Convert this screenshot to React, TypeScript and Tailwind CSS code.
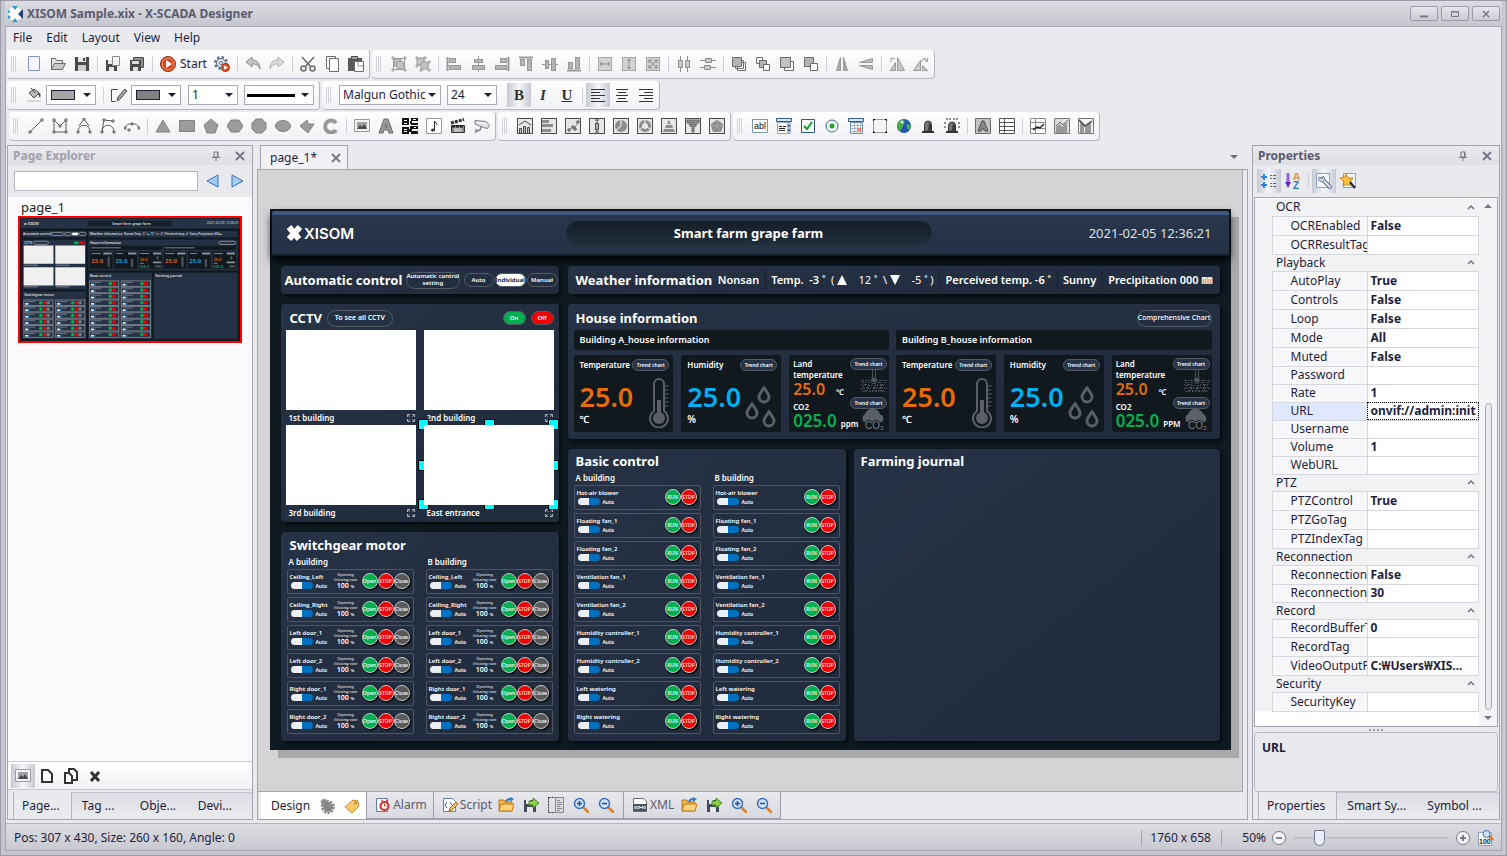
import type { ReactNode } from "react";
import { clsx } from "clsx";

const G = "#8d8d90";
const D = "#4a4a4c";
const L = "#b4b4b6";

/* ---------- icons, all on a 16x16 grid ---------- */

const alignBars = (
  <g fill={L} stroke="#98989a">
    <rect x="3.5" y="2.5" width="6" height="4" />
    <rect x="3.5" y="9.5" width="11" height="4" />
    <path d="M1.5 1v14" strokeWidth="2" />
  </g>
);

const centerBars = (
  <g fill={L} stroke="#98989a">
    <path d="M8.5 0v16" />
    <rect x="4.5" y="3.5" width="8" height="3" />
    <rect x="2.5" y="9.5" width="12" height="4" />
  </g>
);

const frame = <rect x="0.5" y="0.5" width="15" height="15" fill="#e6e6e8" stroke={D} />;

const arrowsBox = <rect x="1.5" y="1.5" width="13" height="13" fill="#d2d2d4" stroke="#a6a6a8" />;

const magnifier = (
  <g>
    <path d="M10 10l5 5" stroke="#d9822b" strokeWidth="2.5" strokeLinecap="round" />
    <circle cx="6.5" cy="6.5" r="5" fill="#cfe2fb" stroke="#3f6fb5" strokeWidth="1.5" />
  </g>
);

const icons: Record<string, ReactNode> = {
  newPage: <path d="M2.5 0.5h11v14h-11z" fill="#f5f8ff" stroke="#7d93cf" />,
  open: (
    <g stroke="#6b6b6d" fill="#e2e2e4">
      <path d="M1.5 13.5v-11h4l1 2h6v3" />
      <path d="M1.5 13.5l3-6h11l-3 6z" fill="#c9c9cb" />
    </g>
  ),
  save: (
    <g>
      <path d="M1 1h14v14H1z" fill={D} />
      <path d="M4 1h8v5H4z" fill="#e8e8ea" />
      <path d="M4 9h8v6H4z" fill="#cfcfd1" />
      <path d="M9 2h2v3H9z" fill={D} />
    </g>
  ),
  saveAs: (
    <g>
      <path d="M1 4h11v11H1z" fill={D} />
      <path d="M3 4h4v4H3zM4 11h5v4H4z" fill="#e8e8ea" />
      <path d="M7.5 0.5h7v9h-7z" fill="#f3f3f5" stroke={G} />
    </g>
  ),
  saveAll: (
    <g>
      <path d="M4.5 1.5h10v10h-10z" fill={G} stroke={D} />
      <path d="M1 4h11v11H1z" fill={D} />
      <path d="M3 5h7v3H3zM4 11h5v4H4z" fill="#dcdcde" />
    </g>
  ),
  play: (
    <g>
      <circle cx="8" cy="8" r="7.5" fill="#d9481c" stroke="#8e2c10" />
      <circle cx="8" cy="8" r="6" fill="none" stroke="#f6a27f" />
      <path d="M6 4l6 4-6 4z" fill="#fff" />
    </g>
  ),
  gearPlay: (
    <g>
      <circle cx="7" cy="7" r="5.5" fill="none" stroke="#5b6b87" strokeWidth="3" strokeDasharray="2.2 2.1" />
      <circle cx="7" cy="7" r="4.5" fill="#dfe6f2" stroke="#5b6b87" />
      <circle cx="7" cy="7" r="1.5" fill="#fff" stroke="#5b6b87" />
      <circle cx="11.5" cy="11.5" r="4" fill="#e0542a" stroke="#a4330f" />
      <path d="M10 9.5l4 2-4 2z" fill="#fff" />
    </g>
  ),
  undo: <path d="M1 6l6-5v3c5 0 8 3 8 9-2-4-4-5-8-5v3z" fill="#c4c4c6" stroke={G} />,
  redo: <path d="M15 6L9 1v3c-5 0-8 3-8 9 2-4 4-5 8-5v3z" fill="#dadadc" stroke="#b0b0b2" />,
  cut: (
    <g fill="none" stroke="#6b6b6d" strokeWidth="1.5">
      <path d="M2 1l9 10M14 1L5 11" />
      <circle cx="3.5" cy="12.5" r="2.5" />
      <circle cx="12.5" cy="12.5" r="2.5" />
    </g>
  ),
  copy: (
    <g fill="#fff" stroke="#6b6b6d">
      <path d="M2.5 0.5h9v12h-9z" />
      <path d="M5.5 2.5h9v13h-9z" />
    </g>
  ),
  paste: (
    <g>
      <path d="M0 2h14v13H0z" fill="#5a5a5c" />
      <path d="M3.5 0.5h6v3h-6z" fill="#a5a5a7" stroke={D} />
      <path d="M6.5 5.5h9v10h-9z" fill="#fff" stroke="#6b6b6d" />
      <path d="M10 6v4h5" fill="none" stroke="#9a9a9c" />
    </g>
  ),
  group: (
    <g fill="#c2c2c4" stroke="#9a9a9c">
      <path d="M2.5 2.5h11v11h-11z" fill="none" />
      <path d="M3 3h7v7H3z" />
      <circle cx="9" cy="9" r="4" />
      <path d="M1 1h2v2H1zM13 1h2v2h-2zM1 13h2v2H1zM13 13h2v2h-2z" fill="#fff" />
    </g>
  ),
  ungroup: (
    <g fill="#c2c2c4" stroke="#9a9a9c">
      <path d="M2 2h7v7H2z" />
      <circle cx="9.5" cy="9.5" r="4" />
      <path d="M1 1h2v2H1zM9 1h2v2H9zM1 9h2v2H1zM13 5h2v2h-2zM13 13h2v2h-2zM5 13h2v2H5z" fill="#fff" />
    </g>
  ),
  alignLeft: alignBars,
  alignCenter: centerBars,
  alignRight: <g transform="matrix(-1 0 0 1 16 0)">{alignBars}</g>,
  alignTop: <g transform="matrix(0 1 1 0 0 0)">{alignBars}</g>,
  alignMiddle: <g transform="matrix(0 1 1 0 0 0)">{centerBars}</g>,
  alignBottom: <g transform="matrix(0 -1 1 0 0 16)">{alignBars}</g>,
  sameWidth: (
    <g>
      {arrowsBox}
      <path d="M3 8h10M5 6L3 8l2 2M11 6l2 2-2 2" fill="none" stroke="#8a8a8c" />
    </g>
  ),
  sameHeight: (
    <g>
      {arrowsBox}
      <path d="M8 3v10M6 5l2-2 2 2M6 11l2 2 2-2" fill="none" stroke="#8a8a8c" />
    </g>
  ),
  sameSize: (
    <g>
      {arrowsBox}
      <path d="M4 4l8 8M12 4l-8 8M4 7V4h3M9 4h3v3M12 9v3H9M7 12H4V9" fill="none" stroke="#8a8a8c" />
    </g>
  ),
  spaceH: (
    <g fill="#c9c9cb" stroke={G}>
      <path d="M4.5 0v16M11.5 0v16" />
      <path d="M2.5 4.5h4v7h-4zM9.5 4.5h4v7h-4z" />
    </g>
  ),
  spaceV: (
    <g fill="#c9c9cb" stroke={G}>
      <path d="M0 4.5h16M0 11.5h16" />
      <path d="M5.5 2.5h6v4h-6zM4.5 9.5h6v4h-6z" />
    </g>
  ),
  toFront: (
    <g fill="#fff" stroke="#6b6b6d">
      <path d="M6.5 6.5h8v8h-8zM4.5 4.5h8v8h-8z" />
      <path d="M1.5 1.5h9v9h-9z" fill={L} />
    </g>
  ),
  forward: (
    <g fill="#fff" stroke="#6b6b6d">
      <path d="M1.5 1.5h6v6h-6z" />
      <path d="M4.5 4.5h7v7h-7z" fill={L} />
      <path d="M8.5 8.5h6v6h-6z" />
    </g>
  ),
  backward: (
    <g fill="#fff" stroke="#6b6b6d">
      <path d="M5.5 5.5h9v9h-9z" />
      <path d="M1.5 1.5h10v10h-10z" fill="#c2c2c4" />
    </g>
  ),
  toBack: (
    <g stroke="#6b6b6d">
      <path d="M1.5 1.5h9v9h-9z" fill={L} />
      <path d="M7.5 7.5h7v7h-7z" fill="#fff" />
    </g>
  ),
  flipH: <path d="M6.5 1.5v13h-4zM9.5 1.5v13h4zM5 6v8M11 6v8" fill="#bcbcbe" stroke="#98989a" />,
  flipV: <path d="M14.5 2.5v4h-13zM14.5 13.5v-4h-13z" fill="#bcbcbe" stroke="#98989a" />,
  rotateLeft: (
    <g fill="#c9c9cb" stroke="#98989a">
      <path d="M1.5 14.5l5-8v8zM8.5 14.5v-13l7 13z" />
      <path d="M2 6V2l4 1" fill="none" />
    </g>
  ),
  rotateRight: (
    <g fill="#c9c9cb" stroke="#98989a">
      <path d="M0.5 14.5l7-10v10zM9.5 14.5v-5l5 5z" />
      <path d="M9 6c0-4 5-5 5-1M11 3l3 3 1-4" fill="none" />
    </g>
  ),
  bucket: (
    <g>
      <path d="M3 6l5-4 5 4-5 5z" fill="#b9b9bb" stroke={D} />
      <path d="M5 1l4 5" stroke={D} />
      <path d="M12 5c3 1 3 4 2 6-1-2-2-3-2-6z" fill={D} />
      <path d="M1 14h14" stroke="#d8d8da" strokeWidth="2" />
    </g>
  ),
  pencil: (
    <g fill="none" stroke={D}>
      <path d="M7 2.5H0.5v12h4" />
      <path d="M6 14l1-4 7-8 2 2-7 8z" fill="#a8a8aa" />
    </g>
  ),
  line: (
    <g fill="#fff" stroke="#5c5c5e">
      <path d="M2 14L14 2" />
      <path d="M1 13h2v2H1zM13 1h2v2h-2z" />
    </g>
  ),
  polyline: (
    <g fill="none" stroke="#5c5c5e">
      <path d="M2 2v12h12V2L8 8z" />
      <path d="M1 1h2v2H1zM13 1h2v2h-2zM1 13h2v2H1zM13 13h2v2h-2zM7 7h2v2H7z" fill="#fff" />
    </g>
  ),
  bezier: (
    <g fill="none" stroke="#5c5c5e">
      <path d="M2 14c0-9 12-9 12 0M8 1L3 8M8 1l5 7" />
      <path d="M7 0h2v2H7zM1 13h2v2H1zM13 13h2v2h-2z" fill="#fff" />
    </g>
  ),
  curve: (
    <g fill="none" stroke="#5c5c5e">
      <path d="M2 14c0-9 12-9 12 0M4 2l9 1M4 2L2 13" />
      <path d="M3 1h2v2H3zM12 2h2v2h-2zM1 13h2v2H1zM13 13h2v2h-2z" fill="#fff" />
    </g>
  ),
  arc: (
    <g fill="none" stroke="#5c5c5e">
      <path d="M1 10c1-6 13-6 14 0" />
      <path d="M0 9h2v2H0zM14 9h2v2h-2zM7 5h2v2H7zM4 11h2v2H4z" fill="#fff" />
    </g>
  ),
  triangle: <path d="M8 2l7 12H1z" fill="#9c9c9e" stroke="#808082" />,
  rectangle: <path d="M0.5 2.5h15v11h-15z" fill="#9c9c9e" stroke="#808082" />,
  pentagon: <path d="M8 1l7 6-3 8H4L1 7z" fill="#9c9c9e" stroke="#808082" />,
  hexagon: <path d="M4 2h8l4 6-4 6H4L0 8z" fill="#9c9c9e" stroke="#808082" />,
  circle: <path d="M5 1h6l4 4v6l-4 4H5l-4-4V5z" fill="#9c9c9e" stroke="#808082" />,
  ellipse: <ellipse cx="8" cy="8" rx="7.5" ry="5.5" fill="#9c9c9e" stroke="#808082" />,
  freeform: <path d="M1 8l7-6 1 4h6l-6 9z" fill="#9c9c9e" stroke="#808082" />,
  cShape: <path d="M13 5a6 6 0 1 0 0 7" fill="none" stroke="#98989a" strokeWidth="4" />,
  image: (
    <g>
      <path d="M0.5 1.5h15v12h-15z" fill="#f4f4f6" stroke="#9a9a9c" />
      <path d="M3 4h10v7H3z" fill="#a2a2a4" />
      <path d="M3 11l3-4 2 2 2-3 3 5z" fill={D} />
    </g>
  ),
  letterA: (
    <path d="M1 15L6 1h4l5 14h-4l-1-3H6l-1 3zM7 9h2L8 6z" fill="#98989a" stroke="#6c6c6e" fillRule="evenodd" />
  ),
  qr: (
    <g fill="#111">
      <path d="M0 0h7v7H0zM0 9h7v7H0zM9 0h7v3H9zM9 5h7v2H9zM8 8h8v3H8zM9 13h7v3H9zM8 3h2v3H8zM7 11h3v3H7z" />
      <path d="M2 2h3v1H2zM2 5h3v1H2zM2 11h3v1H2zM2 13h3v1H2zM11 1h3v1h-3zM12 9h2v1h-2z" fill="#fff" />
    </g>
  ),
  music: (
    <g>
      <path d="M0.5 0.5h15v15h-15z" fill="#fff" stroke="#9a9a9c" />
      <path d="M8.5 12V3l3 4" fill="none" stroke="#333" />
      <ellipse cx="7" cy="12" rx="2" ry="1.5" fill="#333" />
    </g>
  ),
  clapper: (
    <g>
      <path d="M1.5 7.5h13v7h-13z" fill="#8a8a8c" stroke="#333" />
      <path d="M1 5L14 1.5" stroke="#333" strokeWidth="3" strokeDasharray="3 1" />
      <path d="M2 8.5h12" stroke="#222" strokeWidth="2" strokeDasharray="3 1" />
      <path d="M4 11h8M4 13h8" stroke="#eee" />
    </g>
  ),
  camera: (
    <g stroke="#7b7f88" strokeLinejoin="round">
      <path d="M1 2.5l11 1 3.5 4-2 3-4-1L1 6z" fill="#dfe1e6" />
      <path d="M3 4.5l9 1.5" fill="none" stroke="#fff" />
      <path d="M7 9l-1 3-3 1M2 11v4" fill="none" strokeWidth="1.5" />
    </g>
  ),
  chartHome: (
    <g>
      {frame}
      <path d="M2 7l6-4 6 4" fill="none" stroke={D} />
      <path d="M2.5 10.5h2v5h-2zM6.5 8.5h2v7h-2zM10.5 9.5h2v6h-2z" fill="#b9b9bb" stroke={D} />
    </g>
  ),
  barH: (
    <g>
      {frame}
      <path d="M1 2h7v3H1zM1 6h11v3H1zM1 11h9v3H1z" fill={G} />
    </g>
  ),
  scatter: (
    <g>
      {frame}
      <path d="M3.5 12.5l4-3 2 1 3-6" fill="none" stroke={G} />
      <path d="M3 11h2v2H3zM7 8h2v2H7zM12 3h2v2h-2zM9 10h2v2H9z" fill="#fff" stroke={D} />
    </g>
  ),
  boxPlot: (
    <g>
      {frame}
      <path d="M8 2v12M6 2h4M6 14h4" stroke={D} />
      <path d="M6.5 5.5h3v6h-3z" fill={L} stroke={D} />
    </g>
  ),
  pie: (
    <g>
      {frame}
      <circle cx="8" cy="8" r="6" fill={G} />
      <path d="M8 8V2M8 8l-5 4" stroke="#fff" />
    </g>
  ),
  donut: (
    <g>
      {frame}
      <circle cx="8" cy="8" r="4.5" fill="none" stroke={G} strokeWidth="3" />
      <path d="M8 2v3M3 11l3-2M13 11l-3-2" stroke="#fff" />
    </g>
  ),
  pyramid: (
    <g>
      {frame}
      <path d="M8 2l2 4H6zM5 7h6l1 3H4zM3 11h10l1 3H2z" fill={G} />
    </g>
  ),
  funnel: (
    <g>
      {frame}
      <path d="M2 2h12v3H2zM4 6h8l-2 3H6zM7 10h2v4H7z" fill={G} stroke="#6a6a6c" />
    </g>
  ),
  radar: (
    <g>
      {frame}
      <path d="M8 1.5l6.5 5L12 14H4L1.5 6.5z" fill={G} />
      <path d="M8 2v6l6-1M8 8l4 6M8 8l-4 6M8 8L2 7" fill="none" stroke="#a5a5a7" />
    </g>
  ),
  textBox: (
    <g>
      <path d="M0.5 1.5h15v13h-15z" fill="#fff" stroke="#7b95b5" />
      <text x="2" y="11" fontSize="9" fill="#111" fontFamily="Liberation Sans">
        abl
      </text>
    </g>
  ),
  comboBox: (
    <g>
      <path d="M0.5 0.5h15v3h-15z" fill="#dbe8f8" stroke="#2c5a8c" />
      <path d="M1.5 4.5h13v11h-13z" fill="#fff" stroke="#8fa8c8" />
      <path d="M11 5h4v10h-4z" fill="#a8c2ea" />
      <path d="M3 8.5h3M7 8.5h3M3 10.5h6M3 12.5h6" stroke="#222" />
      <path d="M11.5 8.5l1.5-2 1.5 2zM11.5 11.5l1.5 2 1.5-2z" fill="#234" />
    </g>
  ),
  checkBox: (
    <g>
      <path d="M1.5 1.5h13v13h-13z" fill="#f7faff" stroke="#2c5a7c" />
      <path d="M4 8l3 3 5-7" fill="none" stroke="#1e9e1e" strokeWidth="2" />
    </g>
  ),
  radio: (
    <g>
      <circle cx="8" cy="8" r="6" fill="#f2f7fb" stroke="#3b6a8f" />
      <circle cx="8" cy="8" r="2.5" fill="#27a327" />
    </g>
  ),
  calendar: (
    <g>
      <path d="M0.5 0.5h15v3h-15z" fill="#dbe8f8" stroke="#2c5a8c" />
      <path d="M2.5 4.5h12v11h-12z" fill="#fff" stroke="#6f8fc0" />
      <path d="M3 7.5h11M3 10.5h11M3 13.5h11M6.5 5v10M9.5 5v10M12.5 5v10" stroke="#9fb6dc" />
      <path d="M10 10h3v3h-3z" fill="#f08060" />
    </g>
  ),
  panel: (
    <g>
      <path d="M1.5 1.5h13v13h-13z" fill="#f4f4f5" stroke="#9a9a9c" />
      <path d="M1 1h2v1H1zM13 1h2v1h-2zM1 14h2v1H1zM13 14h2v1h-2zM1 1h1v2H1zM14 1h1v2h-1zM1 13h1v2H1zM14 13h1v2h-1z" fill="#111" />
    </g>
  ),
  globe: (
    <g>
      <circle cx="8" cy="8" r="7" fill="#1f56b4" />
      <path d="M3 3c4-3 7 0 5 3S6 12 4 13C1 10 1 6 3 3zM11 6c3 0 4 3 3 5-2 2-4-2-3-5z" fill="#4cae3c" />
      <circle cx="6" cy="4" r="1.5" fill="#d7ecff" />
    </g>
  ),
  lamp: (
    <g>
      <path d="M4.5 13V6.5a3.5 3.5 0 0 1 7 0V13z" fill="#77777a" stroke="#333" />
      <path d="M9 4l2 3v6H8z" fill="#3c3c3e" />
      <path d="M2 14h12" stroke="#333" strokeWidth="2" />
    </g>
  ),
  lampOn: (
    <g>
      <path d="M4.5 13V7.5a3.5 3.5 0 0 1 7 0V13z" fill="#77777a" stroke="#333" />
      <path d="M9 5l2 3v5H8z" fill="#3c3c3e" />
      <path d="M2 14h12" stroke="#333" strokeWidth="2" />
      <path d="M0 5h2M0 9h2M14 5h2M14 9h2M2 1h2M5 1h2M9 1h2M12 1h2" stroke="#222" />
    </g>
  ),
  boxedA: (
    <g>
      <path d="M0.5 0.5h15v15h-15z" fill="#c4c4c6" stroke="#6a6a6c" />
      <path d="M3 13L7 3h2l4 10h-3l-1-2H7l-1 2z" fill="#8a8a8c" stroke={D} />
    </g>
  ),
  grid: <path d="M0.5 0.5h15v15h-15zM0 4.5h16M0 8.5h16M0 12.5h16M5.5 0v16" fill="#fff" stroke="#555" />,
  gridChart: (
    <g fill="none">
      <path d="M0.5 0.5h15v15h-15zM0 4.5h16M0 10.5h16M5.5 0v16" fill="#fff" stroke="#888" />
      <path d="M3 12l4-3 3 1 4-4" stroke="#222" strokeWidth="1.5" />
    </g>
  ),
  areaChart: (
    <g>
      <path d="M0.5 0.5h15v15h-15z" fill="#dcdcde" stroke="#777" />
      <path d="M2 15V9l4-3 2 3 5-5v11z" fill="#98989a" />
      <path d="M2 8l4-4 3 3 5-5" fill="none" stroke="#666" />
    </g>
  ),
  valleyChart: (
    <g>
      <path d="M0.5 0.5h15v15h-15z" fill="#f2f2f4" stroke="#777" />
      <path d="M2 15V4l4 4v7zM7 15V9l6-5v11z" fill="#98989a" />
      <path d="M1 2l6 6 7-5" fill="none" stroke="#444" strokeWidth="1.5" />
    </g>
  ),
  page: <path d="M3 2h6l4 4v8H3z" fill="#fff" stroke="#333" strokeWidth="2" />,
  pages: (
    <g fill="#fff" stroke="#333" strokeWidth="2">
      <path d="M6 1h5l3 3v8H6z" />
      <path d="M2 5h4l3 3v7H2z" />
    </g>
  ),
  cross: <path d="M4 4l8 9M12 4l-8 9" stroke="#333" strokeWidth="3" />,
  gear: (
    <g stroke="#8a8a8c">
      <circle cx="9" cy="9" r="4.5" fill="#8a8a8c" />
      <circle cx="9" cy="9" r="5.5" fill="none" strokeWidth="3" strokeDasharray="2.2 1.2" />
      <circle cx="5" cy="4" r="2.5" fill="#8a8a8c" strokeDasharray="1.5 1" strokeWidth="2" />
      <path d="M5 7l7 5" stroke="#77777a" />
    </g>
  ),
  tag: (
    <g>
      <path d="M1 9l8-7 5 1 1 5-7 7z" fill="#f9c868" stroke="#c8862a" />
      <circle cx="11.5" cy="5" r="1" fill="#fff" stroke="#a06010" />
    </g>
  ),
  alarm: (
    <g>
      <path d="M1.5 1.5h11v13h-11z" fill="#fff" stroke="#5d7fb0" />
      <circle cx="9.5" cy="9" r="4" fill="#fff" stroke="#c92a2a" strokeWidth="2" />
      <path d="M9.5 7v2h2M6 4l2-1M13 4l-2-1" stroke="#c92a2a" fill="none" />
    </g>
  ),
  script: (
    <g>
      <path d="M1.5 1.5h9l3 3v10h-12z" fill="#fff" stroke="#5d7fb0" />
      <path d="M5 5l-2 3 2 3M8 5l2 3" fill="none" stroke="#2f62c4" />
      <path d="M7 14l1-3 6-6 2 2-6 6z" fill="#f6c055" stroke="#a86a1c" />
    </g>
  ),
  folder: (
    <g>
      <path d="M1 14V3h5l1 2h7v9z" fill="#f6b545" stroke="#c07a1c" />
      <path d="M1 14l2-7h13l-2 7z" fill="#fcd27a" stroke="#c07a1c" />
      <path d="M8 5c1-3 3-3 4-3" fill="none" stroke="#2f7ac4" strokeWidth="2" />
      <path d="M12 0l4 2-4 3z" fill="#2f7ac4" />
    </g>
  ),
  saveArrow: (
    <g>
      <path d="M1 3h12v12H1z" fill="#3f4a60" />
      <path d="M4 10h6v5H4zM3 3h4v4H3z" fill="#e8e8ea" />
      <path d="M6 4h4V1l6 5-6 5V8H6z" fill="#8fd044" stroke="#3c8a1c" />
    </g>
  ),
  layout: (
    <g>
      <path d="M0.5 0.5h7v15h-7z" fill="none" stroke="#333" strokeDasharray="2 1" />
      <path d="M7.5 0.5h8v15h-8z" fill="#dcdcde" stroke="#888" />
      <path d="M9 3.5h3M9 5.5h5M9 7.5h5M9 9.5h3M9 11.5h5M9 13.5h3" stroke="#888" />
    </g>
  ),
  zoomIn: (
    <g>
      {magnifier}
      <path d="M4 6.5h5M6.5 4v5" stroke="#1d4fa0" strokeWidth="1.5" />
    </g>
  ),
  zoomOut: (
    <g>
      {magnifier}
      <path d="M4 6.5h5" stroke="#1d4fa0" strokeWidth="1.5" />
    </g>
  ),
  xml: (
    <g>
      <path d="M1.5 1.5h10l3 3v10h-13z" fill="#fff" stroke="#6a6a6c" />
      <path d="M1 7h14v7H1z" fill="#4a5666" />
      <path d="M3 9v3M5 9v3M7 12V9l2 2 2-2v3M13 9v3" fill="none" stroke="#fff" />
    </g>
  ),
  categorized: (
    <g>
      <path d="M0 4h6M3 1v6M0 12h6M3 9v6" stroke="#2f86d8" strokeWidth="2" />
      <path d="M9 2.5h2M12 2.5h3M9 5.5h2M12 5.5h3M9 10.5h2M12 10.5h3M9 13.5h2M12 13.5h3" stroke="#666" />
    </g>
  ),
  sortAz: (
    <g>
      <path d="M3 0v11" stroke="#9a5fe8" strokeWidth="3" />
      <path d="M0 9h6l-3 6z" fill="#5a2fc0" />
      <text x="8" y="7" fontSize="10" fontWeight="700" fill="#e8902a" fontFamily="Liberation Sans">
        A
      </text>
      <text x="8" y="16" fontSize="10" fontWeight="700" fill="#2f7ac4" fontFamily="Liberation Sans">
        Z
      </text>
    </g>
  ),
  wrench: (
    <g>
      <path d="M0.5 0.5h13v14h-13z" fill="#f2f6fd" stroke="#8aa0cc" />
      <path d="M6 6l8 8" stroke="#6d7a96" strokeWidth="4" strokeLinecap="round" />
      <path d="M6 6l8 8" stroke="#dbe2ef" strokeWidth="2" strokeLinecap="round" />
      <path d="M3 4a3 3 0 1 0 4-1L6 6z" fill="#dbe2ef" stroke="#6d7a96" />
    </g>
  ),
  star: (
    <g>
      <path d="M3.5 0.5h12v14h-12z" fill="#f2f6fd" stroke="#8aa0cc" />
      <path d="M6 1l2 4 5 0-3 4 2 4-5-2-4 2 1-5-4-3 5-1z" fill="#ffc23c" stroke="#d98216" />
      <path d="M10 9l5 6" stroke="#222" strokeWidth="2" />
    </g>
  ),
  zoom100: (
    <g>
      <path d="M0.5 2.5h13v13h-13z" fill="#fff" stroke="#8aa0cc" />
      <text x="1" y="14" fontSize="7" fontWeight="700" fill="#223" fontFamily="Liberation Sans">
        100
      </text>
      <path d="M11 6l4 4" stroke="#d9722b" strokeWidth="3" />
      <circle cx="8.5" cy="4" r="3.5" fill="#cfe2fb" stroke="#3f6fb5" />
    </g>
  ),
};

function Icon({ name }: { name: string }) {
  return (
    <svg viewBox="0 0 16 16" className="block size-4 shrink-0" aria-hidden="true">
      {icons[name]}
    </svg>
  );
}

/* ---------- toolbar pieces ---------- */

const pressedStyle = "bg-linear-to-r from-[#c6c9d4] via-[#f6f7fa] to-[#c6c9d4]";

function ToolButton({ name, pressed, wide }: { name: string; pressed?: boolean; wide?: boolean }) {
  return (
    <button
      type="button"
      aria-label={name}
      className={clsx("flex h-6 shrink-0 items-center justify-center", wide ? "w-[25px]" : "w-6", pressed && pressedStyle)}
    >
      <Icon name={name} />
    </button>
  );
}

function Separator() {
  return (
    <span className="flex w-[7px] shrink-0 justify-center">
      <span className="h-4 w-px bg-[#cfd0d8]" />
    </span>
  );
}

function Toolbar({ label, children }: { label: string; children: ReactNode }) {
  return (
    <div
      role="toolbar"
      aria-label={label}
      className="flex h-[29px] shrink-0 items-center rounded-sm border-r border-b border-[#b4b5c0] bg-linear-to-b from-white to-[#f1f1f5] pr-px"
    >
      <span className="mr-1.5 ml-1 flex h-4 w-[5px] shrink-0 justify-center border-x border-[#d3d4db]">
        <span className="w-px bg-[#d3d4db]" />
      </span>
      {children}
    </div>
  );
}

/** "|" stands for a divider between two runs of tools. */
function Tools({ names }: { names: string }) {
  return names.split(" ").map((n, i) => (n === "|" ? <Separator key={i} /> : <ToolButton key={i} name={n} />));
}

function Caret() {
  return (
    <svg viewBox="0 0 8 4" className="h-1 w-2 shrink-0" aria-hidden="true">
      <path d="M0 0h8L4 4z" fill="#1e1e3c" />
    </svg>
  );
}

function Combo({ label, options, width }: { label: string; options: string[]; width: string }) {
  return (
    <span className={clsx("relative mr-1.5 flex h-5 shrink-0 items-center border border-[#a9aab8] bg-white", width)}>
      <select aria-label={label} className="h-full w-full appearance-none bg-transparent pl-[3px] text-[12px] leading-4 outline-none">
        {options.map((o) => (
          <option key={o}>{o}</option>
        ))}
      </select>
      <span className="pointer-events-none absolute right-1">
        <Caret />
      </span>
    </span>
  );
}

function Swatch({ label, color }: { label: string; color: string }) {
  return (
    <button type="button" aria-label={label} className="mr-1 flex h-5 w-[50px] shrink-0 items-center justify-between border border-[#a9aab8] bg-white px-1">
      <span className={clsx("h-2.5 w-6 border border-[#1e1e3c]", color)} />
      <Caret />
    </button>
  );
}

const alignPaths = [
  "M1 2.5h14M1 5.5h9M1 8.5h14M1 11.5h9M1 14.5h14",
  "M2 2.5h12M4 5.5h8M2 8.5h12M4 11.5h8M2 14.5h12",
  "M1 2.5h14M6 5.5h9M1 8.5h14M6 11.5h9M1 14.5h14",
];

/* ---------- side panels ---------- */

function Pin() {
  return (
    <svg viewBox="0 0 10 10" className="size-2.5" aria-hidden="true">
      <path d="M3 1h4v5H3zM1 6.5h8M5 7v3M6.5 1v5" fill="none" stroke="#77778a" />
    </svg>
  );
}

function CloseX() {
  return (
    <svg viewBox="0 0 10 10" className="size-2.5" aria-hidden="true">
      <path d="M1 1l8 8M9 1L1 9" stroke="#77778a" strokeWidth="2" />
    </svg>
  );
}

function PanelHeader({ title, muted }: { title: string; muted?: boolean }) {
  return (
    <div className="flex h-[19px] shrink-0 items-center bg-linear-to-b from-[#e9e9ee] to-[#dfdfe4] pr-[7px] pl-[5px]">
      <h2 className={clsx("flex-1 text-[12px] leading-4 font-bold", muted ? "text-[#9fa0ad]" : "text-[#5b5b70]")}>{title}</h2>
      <button type="button" aria-label={`Pin ${title}`} className="mr-3.5">
        <Pin />
      </button>
      <button type="button" aria-label={`Close ${title}`}>
        <CloseX />
      </button>
    </div>
  );
}

function PanelTabs({ tabs, cell }: { tabs: string[]; cell: string }) {
  return (
    <div role="tablist" className="flex h-[27px] shrink-0">
      {tabs.map((t, i) => (
        <button
          key={t}
          type="button"
          role="tab"
          aria-selected={i === 0}
          className={clsx(
            "h-full text-left text-[12px] leading-4 whitespace-nowrap",
            i === 0 && "ml-[5px] border-x border-[#b4b5c0] pr-[11px] pl-2",
            i > 0 && "border-t border-[#c3c4cd] bg-linear-to-b from-[#dcdde3] to-[#ebecf0] pl-2.5",
            i > 0 && (i === tabs.length - 1 ? "flex-1" : cell),
          )}
        >
          {t}
        </button>
      ))}
    </div>
  );
}

/* ---------- dashboard drawn on the canvas ---------- */

const cardStyle = "rounded-sm bg-linear-to-br from-[#263245] to-[#202c3c] shadow-[2px_2px_4px_#050a0e]";
const pillStyle = "flex items-center justify-center rounded-full border border-[#555b66] text-center whitespace-nowrap";
const headingStyle = "text-[13px] leading-5 font-bold whitespace-nowrap";

function Logo() {
  return (
    <svg viewBox="0 0 70 18" className="h-[18px] w-[70px]" role="img" aria-label="XISOM">
      <path d="M3 3l10 12M14 3L3 15" fill="none" stroke="#fff" strokeWidth="6" />
      <text x="18" y="15" fontSize="15" fontFamily="Inter, sans-serif" fontWeight="600" fill="#fff">
        XISOM
      </text>
    </svg>
  );
}

function ExpandIcon() {
  return (
    <svg viewBox="0 0 8 8" className="size-2" aria-hidden="true">
      <path d="M0.5 3V0.5H3M5 0.5h2.5V3M0.5 5v2.5H3M7.5 5v2.5H5" fill="none" stroke="#aeb4bd" />
      <path d="M1 1l2 2M7 1L5 3M1 7l2-2M7 7L5 5" fill="none" stroke="#7e8692" />
    </svg>
  );
}

const handles = [
  "-left-1.5 -top-1.5",
  "left-[60px] -top-1.5",
  "-right-[5px] -top-1.5",
  "-left-1.5 top-[35px]",
  "-right-[5px] top-[35px]",
  "-left-1.5 -bottom-[5px]",
  "left-[60px] -bottom-[5px]",
  "-right-[5px] -bottom-[5px]",
];

function CameraView({ name, selected }: { name: string; selected?: boolean }) {
  return (
    <figure>
      <div className="relative h-20">
        {selected && handles.map((pos) => <span key={pos} className={clsx("absolute size-[11px] border border-black bg-[#00ffff]", pos)} />)}
        <div className="relative h-full bg-white" />
      </div>
      <figcaption className="flex h-[15px] items-center justify-between pr-px pl-[3px] text-[8px] leading-3 font-semibold">
        {name}
        <ExpandIcon />
      </figcaption>
    </figure>
  );
}

function AutoToggle({ label }: { label: string }) {
  return (
    <label className="flex items-center gap-[3px] text-[5px] leading-2 font-semibold">
      <input
        type="checkbox"
        aria-label={`${label} auto`}
        className="ml-px h-[7px] w-[22px] appearance-none rounded-full bg-linear-to-r from-[#eceff2] from-50% to-[#0070c0] to-50%"
      />
      Auto
    </label>
  );
}

const roundColor: Record<string, string> = {
  Open: "bg-[#00b050]",
  RUN: "bg-[#00b050]",
  STOP: "bg-[#f00000]",
  Close: "bg-[#595959]",
};

function RoundButton({ text }: { text: string }) {
  return (
    <button
      type="button"
      className={clsx(
        "flex size-4 shrink-0 items-center justify-center rounded-full border border-[#c9c9c9] text-[5px] leading-none font-medium shadow-[1px_1px_2px_#000]",
        roundColor[text],
      )}
    >
      {text}
    </button>
  );
}

function MotorRow({ name }: { name: string }) {
  return (
    <li className="flex h-[25px] items-center rounded-xs border border-[#50555e] pr-[3px] pb-px pl-0.5">
      <div className="w-10 shrink-0 whitespace-nowrap">
        <div className="text-[6px] leading-[9px] font-semibold">{name}</div>
        <AutoToggle label={name} />
      </div>
      <div className="flex-1 text-center whitespace-nowrap">
        <div className="text-[4px] leading-[5px]">
          Opening
          <br />
          /closing rate
        </div>
        <div className="text-[7px] leading-2 font-semibold">
          100 <span className="text-[4px]">%</span>
        </div>
      </div>
      <RoundButton text="Open" />
      <RoundButton text="STOP" />
      <RoundButton text="Close" />
    </li>
  );
}

function DeviceRow({ name }: { name: string }) {
  return (
    <li className="flex h-[25px] items-center justify-between rounded-xs border border-[#50555e] pr-[3px] pb-px pl-0.5">
      <div className="whitespace-nowrap">
        <div className="text-[6px] leading-[9px] font-semibold">{name}</div>
        <AutoToggle label={name} />
      </div>
      <div className="flex">
        <RoundButton text="RUN" />
        <RoundButton text="STOP" />
      </div>
    </li>
  );
}

const motors = ["Ceiling_Left", "Ceiling_Right", "Left door_1", "Left door_2", "Right door_1", "Right door_2"];

const devices = [
  "Hot-air blower",
  "Floating fan_1",
  "Floating fan_2",
  "Ventilation fan_1",
  "Ventilation fan_2",
  "Humidity controller_1",
  "Humidity controller_2",
  "Left watering",
  "Right watering",
];

function TrendButton() {
  return (
    <button type="button" className={clsx(pillStyle, "h-3 w-[37px] shrink-0 bg-[#263348] text-[5px] leading-none font-semibold")}>
      Trend chart
    </button>
  );
}

function Thermometer() {
  return (
    <svg viewBox="0 0 20 50" className="h-[50px] w-5" aria-hidden="true">
      <path d="M5 33V6a5 5 0 0 1 10 0v27a9 9 0 1 1-10 0z" fill="none" stroke="#5b6068" strokeWidth="2" />
      <circle cx="10" cy="40" r="6" fill="#5b6068" />
      <path d="M10 22v16" stroke="#5b6068" strokeWidth="4" />
      <path d="M15 8h5M15 12h4M15 16h5M15 20h4M15 24h5M15 28h4" stroke="#5b6068" />
    </svg>
  );
}

function Drops() {
  const drop = "M6 1c3 4 5 6 5 9a5 5 0 0 1-10 0c0-3 2-5 5-9z";
  return (
    <svg viewBox="0 0 32 42" className="h-[42px] w-8" fill="none" stroke="#5b6068" strokeWidth="3" aria-hidden="true">
      <path d={drop} transform="translate(13 1)" />
      <path d={drop} transform="translate(1 17)" />
      <path d={drop} transform="translate(18 25)" />
    </svg>
  );
}

function Soil() {
  return (
    <svg viewBox="0 0 26 22" className="h-[22px] w-[26px]" fill="none" stroke="#4c5159" aria-hidden="true">
      <path d="M11.5 0v8a3 3 0 1 0 3 0V0" />
      <circle cx="13" cy="10" r="2" fill="#5b6068" />
      <path d="M0 10.5h8M18 10.5h8" strokeDasharray="3 1 1 1" />
      <path d="M1 12.5h8M17 12.5h8M1 15.5h24M0 18.5h26M2 21.5h22" strokeDasharray="2 1 1 2" />
      <path d="M0 14.5h10M16 14.5h9M2 17.5h23M1 20.5h24" strokeDasharray="1 2 3 1" />
    </svg>
  );
}

function Co2Cloud() {
  return (
    <svg viewBox="0 0 28 22" className="h-[22px] w-7" aria-hidden="true">
      <path d="M5 13a5 5 0 0 1 1-8 8 8 0 0 1 15 0 5 5 0 0 1 2 8z" fill="#5b6068" />
      <text x="6" y="20" fontSize="10" fontFamily="Liberation Sans" fill="#7b8088" stroke="#11191f" strokeWidth="2" paintOrder="stroke">
        CO₂
      </text>
    </svg>
  );
}

function BigReading({ title, unit, color, art }: { title: string; unit: string; color: string; art: ReactNode }) {
  return (
    <article className="flex flex-col rounded-xs bg-[#11191f] pt-[3px] pr-1 pb-1 pl-1.5">
      <div className="flex items-center justify-between">
        <h4 className="text-[8px] leading-[14px] font-semibold">{title}</h4>
        <TrendButton />
      </div>
      <div className="flex flex-1 items-end justify-between">
        <div>
          <div className={clsx("text-[27px] leading-7 font-semibold", color)}>25.0</div>
          <div className="mt-0.5 mb-[3px] text-[10px] leading-3 font-semibold">{unit}</div>
        </div>
        {art}
      </div>
    </article>
  );
}

function BuildingInfo({ building, co2Unit }: { building: string; co2Unit: string }) {
  return (
    <section>
      <h3 className="rounded-xs bg-[#11191f] px-1.5 text-[9px] leading-5 font-semibold">Building {building}_house information</h3>
      <div className="mt-[5px] grid h-[77px] grid-cols-3 gap-2">
        <BigReading title="Temperature" unit="℃" color="text-[#e46c0a]" art={<Thermometer />} />
        <BigReading title="Humidity" unit="%" color="text-[#00b0f0]" art={<Drops />} />
        <article className="flex justify-between overflow-hidden rounded-xs bg-[#11191f] pt-[3px] pr-0.5 pl-1 whitespace-nowrap">
          <div>
            <h4 className="text-[8px] leading-[11px] font-semibold">
              Land
              <br />
              temperature
            </h4>
            <div className="flex items-end gap-[11px] text-[8px] leading-3 font-semibold">
              <span className="text-[16px] leading-[18px] text-[#e46c0a]">25.0</span>℃
            </div>
            <h4 className="mt-1 text-[8px] leading-[10px] font-semibold">CO2</h4>
            <div className="flex items-end gap-1 text-[8px] leading-3 font-semibold">
              <span className="text-[17px] leading-[18px] text-[#00b050]">025.0</span>
              {co2Unit}
            </div>
          </div>
          <div className="flex w-0 flex-col items-end">
            <TrendButton />
            <Soil />
            <span className="mt-[5px]">
              <TrendButton />
            </span>
            <Co2Cloud />
          </div>
        </article>
      </div>
    </section>
  );
}

function WeatherRule() {
  return <span className="h-5 w-px bg-[#18212e]" />;
}

function Dashboard() {
  return (
    <div className="mb-0.5 flex h-[541px] w-[961px] shrink-0 flex-col bg-[#0f1a21] font-['Noto_Sans','Noto_Sans_CJK_KR',sans-serif] text-white shadow-[8px_8px_0_#a9a9a9]">
      <header className="mx-0.5 mt-0.5 grid h-[45px] grid-cols-[1fr_366px_1fr] items-center rounded-xs border-t-4 border-b-2 border-t-[#3d577f] border-b-[#141c2a] bg-linear-to-b from-[#29374c] to-[#243044] pr-[17px] pb-1 pl-3.5 shadow-[0_4px_8px_#000]">
        <Logo />
        <h1 className="rounded-full bg-linear-to-b from-[#151e28] to-[#1f2f3b] text-center text-[13px] leading-6 font-bold">Smart farm grape farm</h1>
        <time className="text-right text-[13px] leading-4 text-[#dde1e6]">2021-02-05 12:36:21</time>
      </header>

      <div className="mt-2.5 flex min-h-0 flex-1 gap-[9px] px-[11px] pb-[9px]">
        <div className="flex w-[278px] shrink-0 flex-col gap-2.5">
          <section className={clsx(cardStyle, "flex h-7 shrink-0 items-center justify-between pr-px pl-1 text-[6px] leading-[7px] font-semibold")}>
            <h2 className={headingStyle}>Automatic control</h2>
            <button type="button" className={clsx(pillStyle, "h-[17px] w-[54px]")}>
              Automatic control
              <br />
              setting
            </button>
            <span className="flex gap-px">
              <button type="button" className={clsx(pillStyle, "h-3.5 w-[30px]")}>
                Auto
              </button>
              <button type="button" className={clsx(pillStyle, "h-3.5 w-[31px] bg-white text-black")}>
                Individual
              </button>
              <button type="button" className={clsx(pillStyle, "h-3.5 w-[31px]")}>
                Manual
              </button>
            </span>
          </section>

          <section className={clsx(cardStyle, "h-[218px] shrink-0 px-[5px]")}>
            <div className="flex h-[26px] items-center gap-[5px] pt-0.5 pl-1 font-semibold">
              <h2 className={headingStyle}>CCTV</h2>
              <button type="button" className={clsx(pillStyle, "h-[17px] w-[66px] text-[7px]")}>
                To see all CCTV
              </button>
              <button type="button" className={clsx(pillStyle, "ml-auto h-3.5 w-[23px] bg-[#00b050] text-[6px]")}>
                On
              </button>
              <button type="button" className={clsx(pillStyle, "h-3.5 w-[23px] bg-[#f00000] text-[6px]")}>
                Off
              </button>
            </div>
            <div className="grid grid-cols-2 gap-x-2">
              <CameraView name="1st building" />
              <CameraView name="2nd building" />
              <CameraView name="3rd building" />
              <CameraView name="East entrance" selected />
            </div>
          </section>

          <section className={clsx(cardStyle, "min-h-0 flex-1 px-1.5 pt-[3px]")}>
            <h2 className={clsx(headingStyle, "pl-[3px]")}>Switchgear motor</h2>
            <div className="grid grid-cols-2 gap-x-3">
              {["A building", "B building"].map((b) => (
                <div key={b}>
                  <h3 className="pl-0.5 text-[8px] leading-[14px] font-semibold">{b}</h3>
                  <ul className="flex flex-col gap-[3px]">
                    {motors.map((m) => (
                      <MotorRow key={m} name={m} />
                    ))}
                  </ul>
                </div>
              ))}
            </div>
          </section>
        </div>

        <div className="flex min-w-0 flex-1 flex-col gap-2.5">
          <section className={clsx(cardStyle, "flex h-7 shrink-0 items-center justify-between pr-[7px] pl-2 text-[11px] leading-5 font-semibold whitespace-pre")}>
            <h2 className={headingStyle}>Weather information</h2>
            <span>Nonsan</span>
            <WeatherRule />
            <span>Temp.  -3 ˚</span>
            <span className="flex items-center font-normal">
              {"( "}
              <svg viewBox="0 0 8 8" className="size-2.5" aria-hidden="true">
                <path d="M4 0l4 8H0z" fill="#fff" />
              </svg>
              {"    12 ˚  \\ "}
              <svg viewBox="0 0 8 8" className="size-2.5" aria-hidden="true">
                <path d="M0 0h8L4 8z" fill="#fff" />
              </svg>
              {"    -5 ˚ )"}
            </span>
            <WeatherRule />
            <span>Perceived temp. -6 ˚</span>
            <WeatherRule />
            <span>Sunny</span>
            <WeatherRule />
            <span>Precipitation 000 ㎜</span>
          </section>

          <section className={clsx(cardStyle, "h-[135px] shrink-0 pr-2 pl-1.5")}>
            <div className="flex h-[26px] items-center justify-between pt-0.5 pl-0.5 font-semibold">
              <h2 className={headingStyle}>House information</h2>
              <button type="button" className={clsx(pillStyle, "h-[17px] w-[75px] text-[7px] font-medium")}>
                Comprehensive Chart
              </button>
            </div>
            <div className="grid grid-cols-2 gap-[7px]">
              <BuildingInfo building="A" co2Unit="ppm" />
              <BuildingInfo building="B" co2Unit="PPM" />
            </div>
          </section>

          <div className="flex min-h-0 flex-1 gap-2">
            <section className={clsx(cardStyle, "w-[278px] shrink-0 px-1.5 pt-0.5")}>
              <h2 className={clsx(headingStyle, "pl-0.5")}>Basic control</h2>
              <div className="grid grid-cols-2 gap-x-3">
                {["A building", "B building"].map((b) => (
                  <div key={b}>
                    <h3 className="pl-0.5 text-[8px] leading-[14px] font-semibold">{b}</h3>
                    <ul className="flex flex-col gap-[3px]">
                      {devices.map((d) => (
                        <DeviceRow key={d} name={d} />
                      ))}
                    </ul>
                  </div>
                ))}
              </div>
            </section>
            <section className={clsx(cardStyle, "flex-1 px-[7px] pt-0.5")}>
              <h2 className={headingStyle}>Farming journal</h2>
            </section>
          </div>
        </div>
      </div>
    </div>
  );
}

/** Miniature of the page for the explorer list, in canvas coordinates. */
function PageThumbnail() {
  const rows = (count: number, xs: number[], top: number, round: string[]) =>
    xs.flatMap((x) =>
      Array.from({ length: count }, (_, i) => (
        <g key={`${x}-${i}`} transform={`translate(${x} ${top + i * 28})`}>
          <rect width="127" height="24" fill="#263245" stroke="#7d828a" strokeWidth="4" />
          <path d="M6 7h44" stroke="#8a919b" strokeWidth="3" />
          <path d="M6 17h14" stroke="#fff" strokeWidth="7" />
          <path d="M18 17h10" stroke="#0070c0" strokeWidth="7" />
          {round.map((c, k) => (
            <circle key={c} cx={122 - (round.length - k) * 16} cy="12" r="8" fill={c} />
          ))}
        </g>
      )),
    );
  return (
    <svg viewBox="0 0 960 540" preserveAspectRatio="none" className="block h-full w-full" fontFamily="Noto Sans" fontWeight="600" fill="#fff">
      <rect width="960" height="540" fill="#0f1a21" />
      <rect x="2" y="2" width="956" height="44" fill="#263245" />
      <rect x="297" y="11" width="366" height="25" rx="12" fill="#16202a" />
      <g fill="#243043">
        <rect x="11" y="57" width="278" height="28" />
        <rect x="298" y="57" width="652" height="28" />
        <rect x="11" y="95" width="278" height="218" />
        <rect x="298" y="95" width="652" height="135" />
        <rect x="11" y="323" width="278" height="208" />
        <rect x="298" y="240" width="278" height="291" />
        <rect x="584" y="240" width="366" height="291" />
      </g>
      <path d="M16 121h130v80H16zM154 121h130v80H154zM16 216h130v80H16zM154 216h130v80H154z" fill="#f0f0f0" />
      <path
        d="M304 122h315v19H304zM626 122h316v19H626zM304 147h100v76H304zM411 147h100v76H411zM519 147h100v76H519zM626 147h100v76H626zM733 147h100v76H733zM841 147h101v76H841z"
        fill="#11191f"
      />
      <path d="M18 207h60M156 207h60M18 302h60M156 302h60M310 131h130M632 131h130" stroke="#8a919b" strokeWidth="4" />
      <g fill="none" stroke="#8d9299" strokeWidth="4">
        <rect x="137" y="63" width="52" height="14" rx="7" />
        <rect x="194" y="63" width="30" height="14" rx="7" />
        <rect x="258" y="63" width="30" height="14" rx="7" />
        <rect x="60" y="102" width="64" height="14" rx="7" />
        <rect x="868" y="102" width="72" height="14" rx="7" />
      </g>
      <path d="M228 70h26" stroke="#fff" strokeWidth="12" />
      <path d="M236 109h20" stroke="#00b050" strokeWidth="12" />
      <path d="M262 109h20" stroke="#f00000" strokeWidth="12" />
      {[304, 626].map((x) => (
        <g key={x} fontSize="26">
          <text x={x + 7} y="198" fill="#e46c0a">
            25.0
          </text>
          <text x={x + 113} y="198" fill="#00b0f0">
            25.0
          </text>
          <text x={x + 220} y="187" fontSize="16" fill="#e46c0a">
            25.0
          </text>
          <text x={x + 217} y="220" fontSize="17" fill="#00b050">
            025.0
          </text>
          <path d={`M${x + 83} 170v44M${x + 185} 180v36M${x + 296} 168v14M${x + 286} 212h26`} stroke="#4c5159" strokeWidth="10" />
          <path d={`M${x + 60} 156h36M${x + 168} 156h36M${x + 276} 156h36M${x + 276} 195h36`} stroke="#8d9299" strokeWidth="8" />
          <path d={`M${x + 8} 156h40M${x + 116} 156h30M${x + 220} 156h40M${x + 220} 199h16`} stroke="#8a919b" strokeWidth="4" />
        </g>
      ))}
      {rows(6, [17, 156], 360, ["#00b050", "#f00000", "#777777"])}
      {rows(9, [304, 442], 276, ["#00b050", "#f00000"])}
      <g fontSize="15" fillOpacity="0.85">
        <text x="16" y="30">
          ✖ XISOM
        </text>
        <text x="403" y="29">
          Smart farm grape farm
        </text>
        <text x="815" y="28" fontWeight="400">
          2021-02-05 12:36:21
        </text>
        <text x="13" y="76" fontSize="14">
          Automatic control
        </text>
        <text x="304" y="76" fontSize="14">
          Weather information
        </text>
        <text x="454" y="75" fontSize="11">
          Nonsan Temp. -3 ˚ (▲ 12 ˚ \ ▼ -5 ˚) Perceived temp. -6 ˚ Sunny Precipitation 000 ㎜
        </text>
        <text x="19" y="114" fontSize="14">
          CCTV
        </text>
        <text x="305" y="114">
          House information
        </text>
        <text x="19" y="341">
          Switchgear motor
        </text>
        <text x="305" y="257">
          Basic control
        </text>
        <text x="590" y="257">
          Farming journal
        </text>
      </g>
    </svg>
  );
}

/* ---------- property grid ---------- */

type Property = { name: string; value?: string; short?: boolean; active?: boolean };
type Category = { name: string; items: Property[] };

const categories: Category[] = [
  { name: "OCR", items: [{ name: "OCREnabled", value: "False" }, { name: "OCRResultTag" }] },
  {
    name: "Playback",
    items: [
      { name: "AutoPlay", value: "True" },
      { name: "Controls", value: "False" },
      { name: "Loop", value: "False" },
      { name: "Mode", value: "All" },
      { name: "Muted", value: "False" },
      { name: "Password", short: true },
      { name: "Rate", value: "1", short: true },
      { name: "URL", value: "onvif://admin:init", short: true, active: true },
      { name: "Username", short: true },
      { name: "Volume", value: "1", short: true },
      { name: "WebURL", short: true },
    ],
  },
  { name: "PTZ", items: [{ name: "PTZControl", value: "True" }, { name: "PTZGoTag" }, { name: "PTZIndexTag" }] },
  {
    name: "Reconnection",
    items: [
      { name: "Reconnection", value: "False" },
      { name: "Reconnection", value: "30", short: true },
    ],
  },
  {
    name: "Record",
    items: [
      { name: "RecordBufferT", value: "0", short: true },
      { name: "RecordTag" },
      { name: "VideoOutputP", value: "C:₩Users₩XIS..." },
    ],
  },
  { name: "Security", items: [{ name: "SecurityKey" }] },
];

function PropertyGrid() {
  return (
    <table className="w-full table-fixed border-collapse text-[12px] leading-4">
      <colgroup>
        <col className="w-[17px]" />
        <col className="w-[95px]" />
        <col />
      </colgroup>
      {categories.map((c) => (
        <tbody key={c.name}>
          <tr className="h-[17px] bg-[#f1f2f4]">
            <td />
            <th colSpan={2} scope="rowgroup" className="p-0 pr-1 pl-1 text-left font-normal">
              <span className="flex items-center justify-between">
                {c.name}
                <svg viewBox="0 0 8 5" className="h-[5px] w-2" aria-hidden="true">
                  <path d="M1 4l3-3 3 3" fill="none" stroke="#77778a" strokeWidth="1.5" />
                </svg>
              </span>
            </th>
          </tr>
          {c.items.map((p, i) => (
            <tr key={i} className={p.short ? "h-[18px]" : "h-[19px]"}>
              <td className="bg-[#f1f2f4]" />
              <th
                scope="row"
                className={clsx(
                  "overflow-hidden border border-[#d6d7de] p-0 pl-[18px] text-left font-normal whitespace-nowrap",
                  p.active ? "bg-[#dfe8fd]" : "bg-[#f8f8fb]",
                )}
              >
                {p.name}
              </th>
              <td
                className={clsx(
                  "overflow-hidden border border-[#d6d7de] bg-white p-0 pl-[3px] font-bold whitespace-nowrap",
                  p.active && "outline-1 -outline-offset-1 outline-dotted outline-black",
                )}
              >
                {p.value}
              </td>
            </tr>
          ))}
        </tbody>
      ))}
    </table>
  );
}

function PanelArrow({ dir }: { dir: "left" | "right" }) {
  return (
    <button type="button" aria-label={dir === "left" ? "Previous" : "Next"} className="flex w-[25px] justify-center">
      <svg viewBox="0 0 13 14" className="h-3.5 w-[13px]" aria-hidden="true">
        <path d={dir === "left" ? "M12 1v12L1 7z" : "M1 1v12l11-6z"} fill="#9fccf5" stroke="#3f6fac" />
      </svg>
    </button>
  );
}

function DocTab({ icon, label, tools }: { icon: string; label: string; tools: string[] }) {
  return (
    <div className="flex h-[27px] items-center border-r border-b border-[#9c9daa] bg-linear-to-b from-[#e8e8ed] to-[#d9dae0] pr-1 pl-2 text-[#5b5b70]">
      <button type="button" role="tab" className="flex items-center gap-0.5 pr-0.5 text-[12px] leading-4">
        <Icon name={icon} />
        {label}
      </button>
      {tools.map((t) => (
        <ToolButton key={t} name={t} wide />
      ))}
    </div>
  );
}

function ZoomStep({ sign }: { sign: "+" | "-" }) {
  return (
    <button type="button" aria-label={sign === "+" ? "Zoom in" : "Zoom out"}>
      <svg viewBox="0 0 14 14" className="block size-3.5" aria-hidden="true">
        <circle cx="7" cy="7" r="6.5" fill="#f4f4f7" stroke="#77778a" />
        <path d={sign === "+" ? "M4 7h6M7 4v6" : "M4 7h6"} stroke="#5b5b70" strokeWidth="1.5" />
      </svg>
    </button>
  );
}

export default function App() {
  return (
    <div className="flex h-screen flex-col overflow-hidden border border-[#9a9aa8] bg-[#c6c6cf] px-1 pb-1 font-['Noto_Sans',sans-serif] text-[12px] leading-4 text-[#1e1e3c]">
      <header className="flex h-[25px] shrink-0 items-center gap-1 bg-linear-to-b from-[#dcdce2] to-[#c6c6cf] px-0.5">
        <svg viewBox="0 0 16 16" className="size-4" aria-hidden="true">
          <circle cx="8" cy="8" r="7" fill="#fff" />
          <path d="M5 0h6L8 4zM5 16h6l-3-4z" fill="#2a9cc4" />
          <path d="M16 3v10l-5-5z" fill="#1b3f7c" />
          <path d="M1 4l3 2-3 1zM1 9l3 2-3 2z" fill="#2a9cc4" />
        </svg>
        <h1 className="flex-1 text-[12px] leading-4 font-bold text-[#5b5b70]">XISOM Sample.xix - X-SCADA Designer</h1>
        <div className="flex gap-[3px]">
          {["Minimize", "Maximize", "Close window"].map((b, i) => (
            <button key={b} type="button" aria-label={b} className="flex h-[15px] w-7 items-center justify-center rounded-xs border border-[#9a9aa8] bg-linear-to-b from-[#e6e6ec] to-[#cbcbd4]">
              <svg viewBox="0 0 10 8" className="h-2 w-2.5" fill="none" stroke="#77778a" aria-hidden="true">
                {i === 0 && <path d="M1 6.5h8" strokeWidth="2" />}
                {i === 1 && <path d="M1.5 1.5h7v5h-7zM1 2h8" />}
                {i === 2 && <path d="M2 1l6 6M8 1L2 7" strokeWidth="1.5" />}
              </svg>
            </button>
          ))}
        </div>
      </header>

      <div className="flex min-h-0 flex-1 flex-col border border-[#a5a5b2] bg-[#e9eaee]">
        <nav className="flex h-[23px] shrink-0 items-center gap-3.5 pb-0.5 pl-[7px]">
          {["File", "Edit", "Layout", "View", "Help"].map((m) => (
            <button key={m} type="button">
              {m}
            </button>
          ))}
        </nav>

        <div className="flex shrink-0 flex-col gap-0.5 pl-px">
          <div className="flex gap-0.5">
            <Toolbar label="Standard">
              <Tools names="newPage open save | saveAs saveAll |" />
              <button type="button" className="flex h-6 w-[54px] items-center gap-1 pl-1">
                <Icon name="play" />
                Start
              </button>
              <Tools names="gearPlay | undo redo | cut copy paste" />
            </Toolbar>
            <Toolbar label="Arrange">
              <Tools names="group ungroup | alignLeft alignCenter alignRight alignTop alignMiddle alignBottom | sameWidth sameHeight sameSize | spaceH spaceV | toFront forward backward toBack | flipH flipV | rotateLeft rotateRight" />
            </Toolbar>
          </div>
          <div className="flex gap-0.5">
            <Toolbar label="Line and fill">
              <ToolButton name="bucket" />
              <Swatch label="Fill colour" color="bg-[#a6a6a6]" />
              <Separator />
              <ToolButton name="pencil" />
              <Swatch label="Line colour" color="bg-[#808080]" />
              <span className="w-[3px]" />
              <Combo label="Line width" options={["1"]} width="w-[50px]" />
              <button type="button" aria-label="Line style" className="mr-1 flex h-5 w-[70px] items-center justify-between border border-[#a9aab8] bg-white pr-1 pl-0.5">
                <span className="h-[3px] w-12 bg-black" />
                <Caret />
              </button>
            </Toolbar>
            <Toolbar label="Text">
              <span className="w-0.5" />
              <Combo label="Font" options={["Malgun Gothic"]} width="w-[102px]" />
              <Combo label="Font size" options={["24"]} width="w-[50px]" />
              <span className="w-1" />
              <button type="button" className={clsx("h-6 w-6 font-['Liberation_Serif',serif] text-[15px] font-bold text-[#333]", pressedStyle)}>
                B
              </button>
              <button type="button" className="h-6 w-6 font-['Liberation_Serif',serif] text-[15px] font-bold text-[#333] italic">
                I
              </button>
              <button type="button" className="h-6 w-6 font-['Liberation_Serif',serif] text-[15px] font-bold text-[#333] underline">
                U
              </button>
              <Separator />
              {alignPaths.map((d, i) => (
                <button
                  key={d}
                  type="button"
                  aria-label="Text alignment"
                  className={clsx("flex h-6 w-6 items-center justify-center", i === 0 && pressedStyle)}
                >
                  <svg viewBox="0 0 16 16" className="size-4" aria-hidden="true">
                    <path d={d} stroke="#333" />
                  </svg>
                </button>
              ))}
            </Toolbar>
          </div>
          <div className="flex gap-0.5 pl-0.5">
            <Toolbar label="Shapes">
              <Tools names="line polyline bezier curve arc | triangle rectangle pentagon hexagon circle ellipse freeform cShape | image letterA qr music clapper camera" />
            </Toolbar>
            <Toolbar label="Charts">
              <Tools names="chartHome barH scatter boxPlot pie donut pyramid funnel radar" />
            </Toolbar>
            <Toolbar label="Controls">
              <Tools names="textBox comboBox checkBox radio calendar panel globe lamp lampOn | boxedA grid | gridChart areaChart valleyChart" />
            </Toolbar>
          </div>
        </div>

        <main className="mt-1 flex min-h-0 flex-1 gap-1 px-px pb-[3px]">
          <aside className="flex w-[246px] shrink-0 flex-col border border-[#a5a5b2]">
            <PanelHeader title="Page Explorer" muted />
            <div className="flex h-8 shrink-0 items-center pl-1.5">
              <input aria-label="Search pages" className="h-5 w-[184px] border border-[#b4b5c0] bg-white px-1 outline-none" />
              <span className="ml-0.5 flex">
                <PanelArrow dir="left" />
                <PanelArrow dir="right" />
              </span>
            </div>
            <div className="min-h-0 flex-1 bg-[#fafafa] px-2.5 pt-0.5">
              <div className="pl-[3px] text-[13px] leading-[17px] text-[#222]">page_1</div>
              <div className="h-[127px] border-2 border-[#ff0000]">
                <PageThumbnail />
              </div>
            </div>
            <div className="mb-0.5 flex h-[29px] shrink-0 items-center border-y border-[#c9cad3] bg-linear-to-b from-white to-[#f1f1f5] pl-[3px]">
              <ToolButton name="image" pressed />
              <Tools names="page pages cross" />
            </div>
            <PanelTabs tabs={["Page...", "Tag ...", "Obje...", "Devi..."]} cell="w-[58px]" />
          </aside>

          <section className="flex min-w-0 flex-1 flex-col">
            <div className="flex h-6 shrink-0 items-end justify-between pr-2.5 pl-[3px]">
              <div className="flex h-6 items-center gap-3.5 border border-b-0 border-[#a5a5b2] bg-[#f1f1f5] pr-1.5 pl-[9px]">
                <button type="button">page_1*</button>
                <button type="button" aria-label="Close page_1">
                  <CloseX />
                </button>
              </div>
              <button type="button" aria-label="Open pages" className="mb-2.5 flex opacity-60">
                <Caret />
              </button>
            </div>
            <div className="flex min-h-0 flex-1 flex-col border border-[#a5a5b2] pr-1">
              <div className="flex min-h-0 flex-1 items-center justify-center overflow-hidden border-r border-[#a5a5b2] bg-[#d4d4d4]">
                <Dashboard />
              </div>
              <div role="tablist" className="flex h-7 shrink-0 border-t border-[#a5a5b2] pl-[3px]">
                <div className="flex h-[28px] items-center border-r border-b border-[#9c9daa] bg-white pr-0.5 pl-1.5">
                  <button type="button" role="tab" aria-selected="true" className="px-1">
                    Design
                  </button>
                  <ToolButton name="gear" wide />
                  <ToolButton name="tag" wide />
                </div>
                <DocTab icon="alarm" label="Alarm" tools={[]} />
                <DocTab icon="script" label="Script" tools={["folder", "saveArrow", "layout", "zoomIn", "zoomOut"]} />
                <DocTab icon="xml" label="XML" tools={["folder", "saveArrow", "zoomIn", "zoomOut"]} />
              </div>
            </div>
          </section>

          <aside className="flex w-[248px] shrink-0 flex-col border border-[#a5a5b2]">
            <PanelHeader title="Properties" />
            <div className="flex h-8 shrink-0 items-center pl-1">
              <ToolButton name="categorized" pressed />
              <ToolButton name="sortAz" />
              <Separator />
              <ToolButton name="wrench" pressed />
              <ToolButton name="star" />
            </div>
            <div className="mx-px flex min-h-0 flex-1 overflow-hidden border border-[#a5a5b2] bg-white">
              <div className="min-w-0 flex-1 pt-px">
                <PropertyGrid />
              </div>
              <div className="flex w-[18px] shrink-0 flex-col items-center bg-[#f4f4f7] py-1.5" aria-hidden="true">
                <svg viewBox="0 0 8 4" className="h-1 w-2">
                  <path d="M0 4h8L4 0z" fill="#77778a" />
                </svg>
                <div className="flex-[198]" />
                <div className="w-[7px] flex-[310] rounded-full border border-[#a5a5b2] bg-[#e9eaee]" />
                <svg viewBox="0 0 8 4" className="mt-1.5 h-1 w-2">
                  <path d="M0 0h8L4 4z" fill="#77778a" />
                </svg>
              </div>
            </div>
            <div className="flex h-[5px] shrink-0 items-center justify-center">
              <span className="w-3.5 border-t-2 border-dotted border-[#9a9aa8]" />
            </div>
            <div className="mx-px h-[60px] shrink-0 rounded-sm border border-[#b9bac4] px-[7px] py-[7px] font-bold">URL</div>
            <PanelTabs tabs={["Properties", "Smart Sy...", "Symbol ..."]} cell="w-20" />
          </aside>
        </main>

        <footer className="flex h-[27px] shrink-0 items-center border-t border-[#b4b5c0] bg-linear-to-b from-[#dcdce2] to-[#c9c9d1] pt-0.5 pr-[7px] pl-2">
          <span className="flex-1">Pos: 307 x 430, Size: 260 x 160, Angle: 0</span>
          <span className="w-20 border-l border-[#a5a5b2] pl-2">1760 x 658</span>
          <span className="border-l border-[#a5a5b2] pr-1.5 pl-5">50%</span>
          <ZoomStep sign="-" />
          <input
            type="range"
            aria-label="Zoom"
            min={0}
            max={100}
            defaultValue={14}
            className="mx-2 h-4 w-[154px] appearance-none bg-linear-to-b from-transparent from-45% via-[#a5a5b2] via-50% to-transparent to-55% [&::-webkit-slider-thumb]:h-4 [&::-webkit-slider-thumb]:w-[11px] [&::-webkit-slider-thumb]:appearance-none [&::-webkit-slider-thumb]:rounded-b-md [&::-webkit-slider-thumb]:border [&::-webkit-slider-thumb]:border-[#77778a] [&::-webkit-slider-thumb]:bg-[#e8ecfb]"
          />
          <ZoomStep sign="+" />
          <span className="ml-2">
            <Icon name="zoom100" />
          </span>
        </footer>
      </div>
    </div>
  );
}
